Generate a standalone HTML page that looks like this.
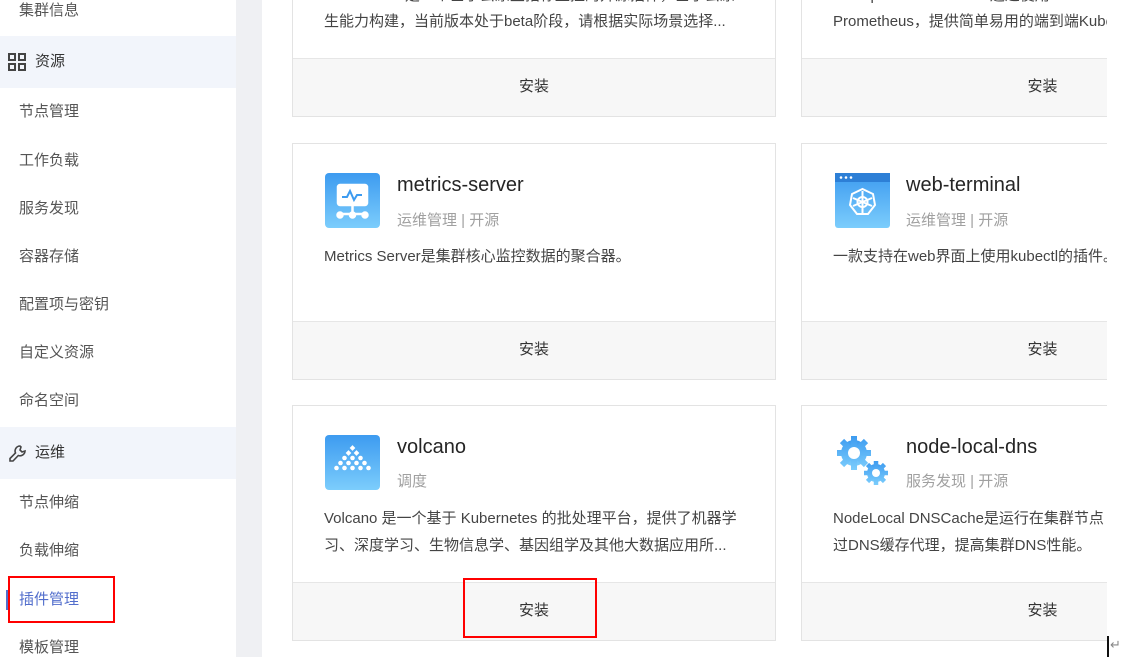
<!DOCTYPE html>
<html><head><meta charset="utf-8"><style>
*{margin:0;padding:0;box-sizing:border-box}
body{width:1129px;height:657px;overflow:hidden;background:#fff;position:relative;font-family:"Liberation Sans","Noto Sans CJK SC",sans-serif}
.a{position:absolute;white-space:nowrap}
.side{position:absolute;left:0;top:0;width:236px;height:657px;background:#fff}
.strip{position:absolute;left:236px;top:0;width:26px;height:657px;background:#eff0f3}
.it{position:absolute;left:19px;font-size:15px;color:#555;line-height:20px}
.grp{position:absolute;left:0;width:236px;height:52px;background:#f2f5fb}
.card{position:absolute;background:#fff;border:1px solid #e3e3e3;overflow:hidden}
.rc{width:306px;border-right:none}
.ft{position:absolute;left:0;right:0;bottom:0;height:58px;background:#f7f7f7;border-top:1px solid #e6e6e6;text-align:center;line-height:56px;font-size:15px;color:#333}
.rc .ft{padding-left:176px}
.t{position:absolute;font-size:20px;color:#252525;line-height:24px}
.g{position:absolute;font-size:15px;color:#a0a0a0;line-height:20px}
.d{position:absolute;font-size:15px;color:#444;line-height:27px;white-space:nowrap}
.ic{position:absolute;width:55px;height:55px;border-radius:4px;background:linear-gradient(#3d9bf0,#7ccdfc)}
.red{position:absolute;border:2px solid #f00}
</style></head><body>
<div class="side">
<div class="it" style="top:1px">集群信息</div>
<div class="grp" style="top:36px"></div>
<svg class="a" style="left:8px;top:53px" width="18" height="18" viewBox="0 0 18 18" fill="none" stroke="#444" stroke-width="2"><rect x="1" y="1" width="6" height="6"/><rect x="11" y="1" width="6" height="6"/><rect x="1" y="11" width="6" height="6"/><rect x="11" y="11" width="6" height="6"/></svg>
<div class="it" style="top:52px;left:35px;color:#333">资源</div>
<div class="it" style="top:102px">节点管理</div>
<div class="it" style="top:151px">工作负载</div>
<div class="it" style="top:199px">服务发现</div>
<div class="it" style="top:247px">容器存储</div>
<div class="it" style="top:295px">配置项与密钥</div>
<div class="it" style="top:343px">自定义资源</div>
<div class="it" style="top:391px">命名空间</div>
<div class="grp" style="top:427px"></div>
<svg class="a" style="left:8px;top:444px" width="19" height="19" viewBox="0 0 19 19" fill="none" stroke="#444" stroke-width="1.6"><path d="M12 2a5 5 0 0 0-4.5 7L2 14.5 2 17h3l5.3-5.5A5 5 0 0 0 17 7l-3 1-2-2 1-3z"/></svg>
<div class="it" style="top:443px;left:35px;color:#333">运维</div>
<div class="it" style="top:493px">节点伸缩</div>
<div class="it" style="top:541px">负载伸缩</div>
<div class="a" style="left:6px;top:590px;width:2px;height:20px;background:#526ecc"></div>
<div class="it" style="top:590px;color:#526ecc">插件管理</div>
<div class="it" style="top:638px">模板管理</div>
</div>
<div class="strip"></div>

<!-- row 1 -->
<div class="card" style="left:292px;top:-20px;width:484px;height:137px">
<div class="d" style="left:31px;top:1px">Prometheus是一个基于云原生指标监控的开源插件，基于云原</div>
<div class="d" style="left:31px;top:27px">生能力构建，当前版本处于beta阶段，请根据实际场景选择...</div>
<div class="ft">安装</div></div>
<div class="card rc" style="left:801px;top:-20px;height:137px">
<div class="d" style="left:31px;top:1px">kube-prometheus-stack通过使用Prometheus</div>
<div class="d" style="left:31px;top:27px">Prometheus，提供简单易用的端到端Kubernetes</div>
<div class="ft">安装</div></div>

<!-- row 2 -->
<div class="card" style="left:292px;top:143px;width:484px;height:237px">
<div class="ic" style="left:32px;top:29px"><svg width="55" height="55" viewBox="0 0 55 55" fill="none" stroke="#fff" stroke-width="2.5"><rect x="13" y="12" width="29" height="20" rx="2" fill="#fff"/><path d="M17 24h5l3-6 4 9 3-5h5" stroke="#3d9bf0" stroke-width="2"/><path d="M27.5 32v9M15 41h25"/><circle cx="15" cy="42" r="2.5" fill="#fff"/><circle cx="27.5" cy="42" r="2.5" fill="#fff"/><circle cx="40" cy="42" r="2.5" fill="#fff"/></svg></div>
<div class="t" style="left:104px;top:29px">metrics-server</div>
<div class="g" style="left:104px;top:67px">运维管理 | 开源</div>
<div class="d" style="left:31px;top:99px">Metrics Server是集群核心监控数据的聚合器。</div>
<div class="ft">安装</div></div>
<div class="card rc" style="left:801px;top:143px;height:237px">
<div class="ic" style="left:33px;top:29px;border-radius:3px"><svg width="55" height="55" viewBox="0 0 55 55" fill="none" stroke="#fff" stroke-width="2"><rect x="0" y="0" width="55" height="9" fill="#2d7fd6" stroke="none"/><circle cx="6" cy="4.5" r="1.3" fill="#fff" stroke="none"/><circle cx="11" cy="4.5" r="1.3" fill="#fff" stroke="none"/><circle cx="16" cy="4.5" r="1.3" fill="#fff" stroke="none"/><polygon points="27.5,16 38,21 40,32 33,41 22,41 15,32 17,21"/><circle cx="27.5" cy="29" r="5"/><path d="M27.5 18v22M18 25l19 8M37 25l-19 8"/></svg></div>
<div class="t" style="left:104px;top:29px">web-terminal</div>
<div class="g" style="left:104px;top:67px">运维管理 | 开源</div>
<div class="d" style="left:31px;top:99px">一款支持在web界面上使用kubectl的插件。</div>
<div class="ft">安装</div></div>

<!-- row 3 -->
<div class="card" style="left:292px;top:405px;width:484px;height:236px">
<div class="ic" style="left:32px;top:29px"><svg width="55" height="55" viewBox="0 0 55 55" fill="#fff">
<g><rect x="25.5" y="11" width="4" height="4" transform="rotate(45 27.5 13)"/><rect x="21.5" y="16" width="4" height="4" transform="rotate(45 23.5 18)"/><rect x="29.5" y="16" width="4" height="4" transform="rotate(45 31.5 18)"/><circle cx="19.5" cy="23" r="2.3"/><circle cx="27.5" cy="23" r="2.3"/><circle cx="35.5" cy="23" r="2.3"/><circle cx="15.5" cy="28" r="2.3"/><circle cx="23.5" cy="28" r="2.3"/><circle cx="31.5" cy="28" r="2.3"/><circle cx="39.5" cy="28" r="2.3"/><circle cx="11.5" cy="33" r="2.3"/><circle cx="19.5" cy="33" r="2.3"/><circle cx="27.5" cy="33" r="2.3"/><circle cx="35.5" cy="33" r="2.3"/><circle cx="43.5" cy="33" r="2.3"/></g></svg></div>
<div class="t" style="left:104px;top:29px">volcano</div>
<div class="g" style="left:104px;top:66px">调度</div>
<div class="d" style="left:31px;top:99px">Volcano 是一个基于 Kubernetes 的批处理平台，提供了机器学</div>
<div class="d" style="left:31px;top:126px">习、深度学习、生物信息学、基因组学及其他大数据应用所...</div>
<div class="ft">安装</div></div>
<div class="card rc" style="left:801px;top:405px;height:236px">
<svg class="a" style="left:32px;top:27px" width="56" height="56" viewBox="0 0 56 56"><defs><linearGradient id="gg" x1="0" y1="0" x2="0" y2="1"><stop offset="0" stop-color="#3d9bf0"/><stop offset="1" stop-color="#7ccdfc"/></linearGradient></defs>
<g fill="url(#gg)"><circle cx="20" cy="20" r="13"/><g stroke="url(#gg)" stroke-width="6"><path d="M20 3v34M3 20h34M8 8l24 24M32 8 8 32"/></g><circle cx="42" cy="40" r="9"/><g stroke="url(#gg)" stroke-width="4.5"><path d="M42 28v24M30 40h24M33.5 31.5l17 17M50.5 31.5l-17 17"/></g></g>
<circle cx="20" cy="20" r="6" fill="#fff"/><circle cx="42" cy="40" r="4" fill="#fff"/></svg>
<div class="t" style="left:104px;top:29px">node-local-dns</div>
<div class="g" style="left:104px;top:66px">服务发现 | 开源</div>
<div class="d" style="left:31px;top:99px">NodeLocal DNSCache是运行在集群节点</div>
<div class="d" style="left:31px;top:126px">过DNS缓存代理，提高集群DNS性能。</div>
<div class="ft">安装</div></div>
<div class="a" style="left:1107px;top:636px;width:2px;height:21px;background:#111"></div>
<div class="a" style="left:1110px;top:637px;font-size:13px;color:#888">↵</div>

<div class="red" style="left:8px;top:576px;width:107px;height:47px"></div>
<div class="red" style="left:463px;top:578px;width:134px;height:60px"></div>
</body></html>
